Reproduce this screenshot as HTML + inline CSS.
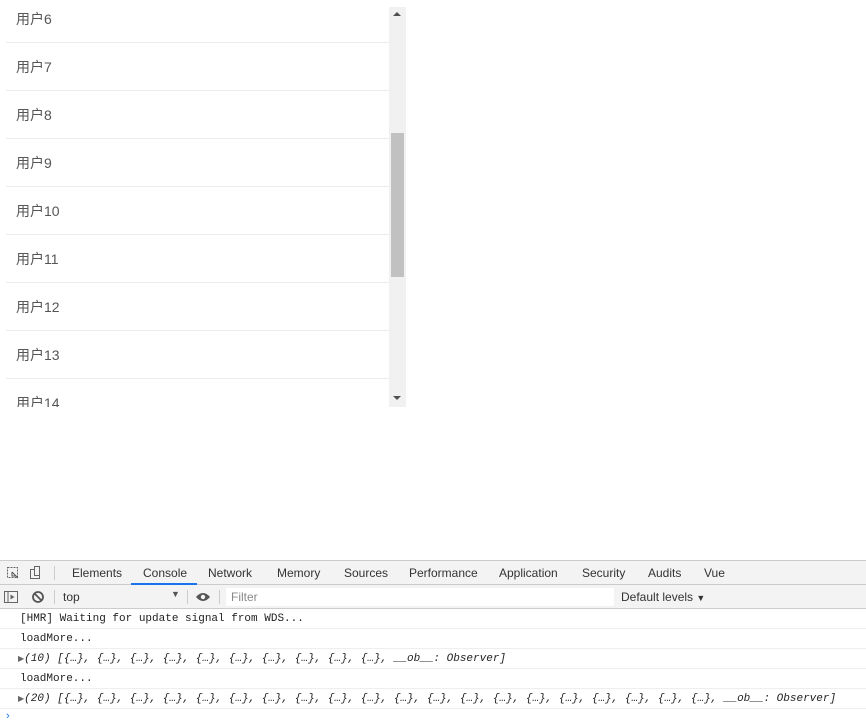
<!DOCTYPE html>
<html><head><meta charset="utf-8"><style>
*{margin:0;padding:0;box-sizing:border-box}
body{width:866px;height:719px;overflow:hidden;background:#fff;font-family:"Liberation Sans","Noto Sans CJK SC",sans-serif;position:relative}
.box{position:absolute;left:6px;top:7px;width:400px;height:400px;overflow:hidden}
.inner{position:absolute;left:0;top:-12px;width:383px}
.row{height:48px;border-bottom:1px solid #ebebf0;padding-left:10px;line-height:48px;font-size:14px;color:#555}
.sb{position:absolute;left:389px;top:7px;width:17px;height:400px;background:#f1f1f1}
.thumb{position:absolute;left:391px;top:133px;width:13px;height:144px;background:#c1c1c1}
.dev{position:absolute;left:0;top:560px;width:866px;height:159px;font-size:12px;color:#333}
.tabs{height:25px;background:#f3f3f3;border-top:1px solid #ccc;border-bottom:1px solid #ccc;position:relative}
.tab{position:absolute;top:5px}
.tb{height:24px;background:#f3f3f3;border-bottom:1px solid #ccc;position:relative}
.ln{height:20px;border-bottom:1px solid #eee;font-family:"Liberation Mono",monospace;font-size:11px;line-height:20px;padding-left:20px;color:#222}
.it{font-style:italic}
</style></head><body>
<div class="box"><div class="inner">
<div class="row">用户6</div><div class="row">用户7</div><div class="row">用户8</div><div class="row">用户9</div><div class="row">用户10</div><div class="row">用户11</div><div class="row">用户12</div><div class="row">用户13</div><div class="row">用户14</div>
</div></div>
<div class="sb"></div><div class="thumb"></div>
<div style="position:absolute;left:393px;top:12px;width:0;height:0;border-left:4px solid transparent;border-right:4px solid transparent;border-bottom:4px solid #505050"></div>
<div style="position:absolute;left:393px;top:396px;width:0;height:0;border-left:4px solid transparent;border-right:4px solid transparent;border-top:4px solid #505050"></div>
<div class="dev">
<div class="tabs">
<svg style="position:absolute;left:6px;top:5px" width="38" height="14"><rect x="1.5" y="1.5" width="10" height="10" fill="none" stroke="#666" stroke-dasharray="2 1"/><path d="M6 6l6 6M6 6v4h4" stroke="#555" fill="none"/><rect x="24.5" y="3.5" width="9" height="9" fill="none" stroke="#666"/><rect x="28.5" y="0.5" width="5" height="9" fill="#f3f3f3" stroke="#666"/></svg>
<div style="position:absolute;left:54px;top:5px;width:1px;height:14px;background:#ccc"></div>
<span class="tab" style="left:72px">Elements</span>
<span class="tab" style="left:143px;color:#333">Console</span>
<div style="position:absolute;left:131px;top:22px;width:66px;height:2px;background:#1a73e8"></div>
<span class="tab" style="left:208px">Network</span>
<span class="tab" style="left:277px">Memory</span>
<span class="tab" style="left:344px">Sources</span>
<span class="tab" style="left:409px">Performance</span>
<span class="tab" style="left:499px">Application</span>
<span class="tab" style="left:582px">Security</span>
<span class="tab" style="left:648px">Audits</span>
<span class="tab" style="left:704px">Vue</span>
</div>
<div class="tb">
<svg style="position:absolute;left:4px;top:5px" width="42" height="14"><rect x="0.5" y="1.5" width="13" height="11" fill="none" stroke="#666"/><path d="M4 2v10" stroke="#666"/><path d="M6.5 4.5l4 2.5-4 2.5z" fill="#666"/><circle cx="34" cy="7" r="5" fill="none" stroke="#555" stroke-width="1.8"/><path d="M30.5 3.5l7 7" stroke="#555" stroke-width="1.8"/></svg>
<div style="position:absolute;left:54px;top:5px;width:1px;height:14px;background:#ccc"></div>
<span style="position:absolute;left:63px;top:5px">top</span>
<span style="position:absolute;left:171px;top:4px;font-size:9px;color:#555">▼</span>
<div style="position:absolute;left:187px;top:5px;width:1px;height:14px;background:#ccc"></div>
<svg style="position:absolute;left:195px;top:6px" width="16" height="12"><path d="M1 6Q8 -2 15 6Q8 14 1 6z" fill="#555"/><circle cx="8" cy="6" r="2.2" fill="#f3f3f3"/></svg>
<div style="position:absolute;left:219px;top:5px;width:1px;height:14px;background:#ccc"></div>
<div style="position:absolute;left:226px;top:3px;width:388px;height:18px;background:#fff"></div>
<span style="position:absolute;left:231px;top:5px;color:#888">Filter</span>
<span style="position:absolute;left:621px;top:5px">Default levels <span style="font-size:9px">▼</span></span>
</div>
<div class="ln">[HMR] Waiting for update signal from WDS...</div>
<div class="ln">loadMore...</div>
<div class="ln it"><span style="font-style:normal;font-size:8px;color:#666;margin-left:-2px">▶</span>(10) [{…}, {…}, {…}, {…}, {…}, {…}, {…}, {…}, {…}, {…}, __ob__: Observer]</div>
<div class="ln">loadMore...</div>
<div class="ln it"><span style="font-style:normal;font-size:8px;color:#666;margin-left:-2px">▶</span>(20) [{…}, {…}, {…}, {…}, {…}, {…}, {…}, {…}, {…}, {…}, {…}, {…}, {…}, {…}, {…}, {…}, {…}, {…}, {…}, {…}, __ob__: Observer]</div>
<span style="position:absolute;left:6px;top:150px;color:#1a73e8;font-size:11px">›</span>
</div>
</body></html>
